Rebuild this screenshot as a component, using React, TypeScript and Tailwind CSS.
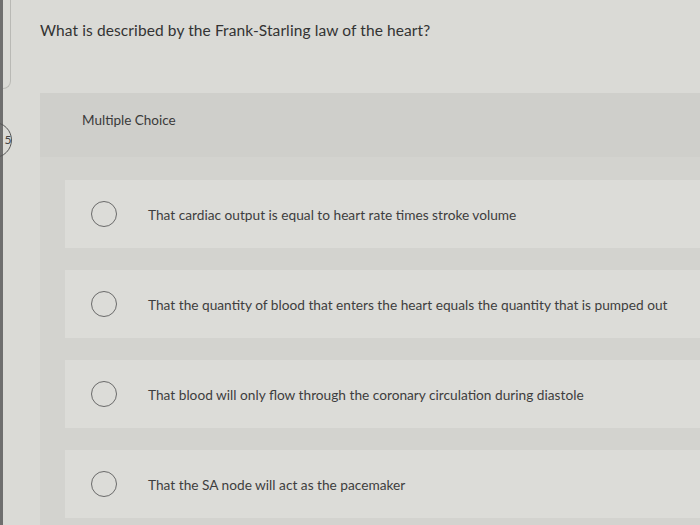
import React from "react";

const options = [
  "That cardiac output is equal to heart rate times stroke volume",
  "That the quantity of blood that enters the heart equals the quantity that is pumped out",
  "That blood will only flow through the coronary circulation during diastole",
  "That the SA node will act as the pacemaker",
];

export default function App() {
  return (
    <div
      className="w-[700px] h-[525px] flex overflow-hidden bg-[#dadad6] text-[#3d3d3d]"
      style={{ fontFamily: "Lato, 'Open Sans', 'Liberation Sans', sans-serif" }}
    >
      <div className="w-[3px] shrink-0 bg-[#6e6e6e]" />
      <div className="w-[37px] shrink-0 flex flex-col">
        <div className="w-[8px] h-[89px] border-r border-b border-[#b9b9b5] rounded-br-[8px]" />
        <div className="mt-[33px] -ml-[27px] w-[36px] h-[36px] rounded-full border border-[#555] flex items-center justify-center">
          <span className="pl-[28px] text-[12px] text-[#444]">5</span>
        </div>
      </div>
      <div className="flex-1 flex flex-col">
        <div className="h-[93px] pt-[19px] text-[15.5px] text-[#333] tracking-[0.1px]">
          What is described by the Frank-Starling law of the heart?
        </div>
        <div className="h-[64px] bg-[#cfcfcb] pl-[42px] pt-[17px] text-[13.5px] text-[#3a3a3a]">
          Multiple Choice
        </div>
        <div className="flex-1 bg-[#d3d3cf] pl-[25px] pt-[23px] flex flex-col gap-[22px]">
          {options.map((t, i) => (
            <div
              key={i}
              className="h-[68px] bg-[#dcdcd8] flex items-center pl-[26px]"
            >
              <div className="w-[26px] h-[26px] rounded-full border-[1.5px] border-[#6a6a6a] shrink-0" />
              <div className="ml-[31px] pt-[3px] text-[13.7px] text-[#3e3e3e] whitespace-nowrap">{t}</div>
            </div>
          ))}
        </div>
      </div>
    </div>
  );
}
